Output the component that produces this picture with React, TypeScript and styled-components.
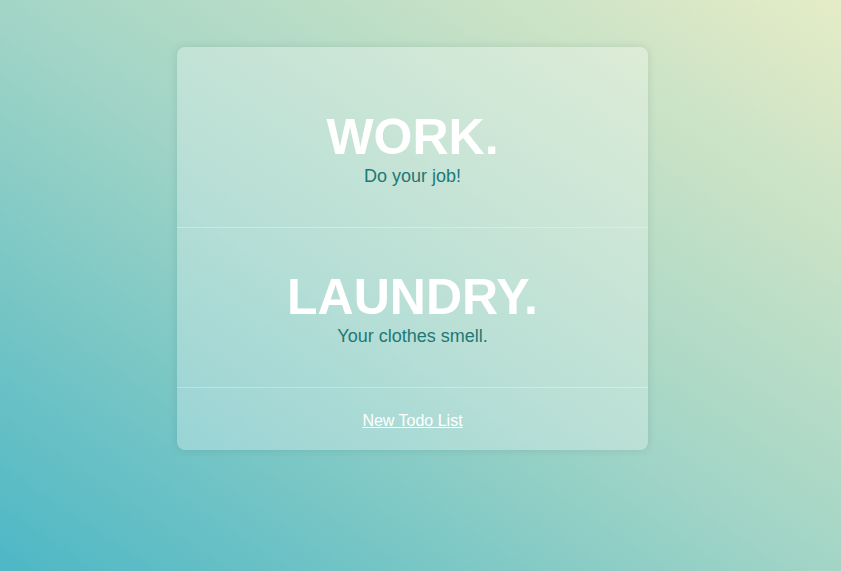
import styled, { createGlobalStyle } from "styled-components";

const GlobalStyle = createGlobalStyle`
  html, body {
    margin: 0;
    height: 100%;
  }
  body {
    font-family: "Liberation Sans", Arial, sans-serif;
    background: linear-gradient(to top right, #4db7c5 0%, #a3d5c6 50%, #e5ecc6 100%);
    background-attachment: fixed;
    min-height: 571px;
  }
`;

interface Todo {
  title: string;
  note: string;
}

const todos: Todo[] = [
  { title: "WORK.", note: "Do your job!" },
  { title: "LAUNDRY.", note: "Your clothes smell." },
];

function App() {
  return (
    <>
      <GlobalStyle />
      <StyledPage>
        <Card>
          {todos.map((todo) => (
            <Section key={todo.title}>
              <Title>{todo.title}</Title>
              <Note>{todo.note}</Note>
            </Section>
          ))}
          <Footer>
            <NewLink href="#">New Todo List</NewLink>
          </Footer>
        </Card>
      </StyledPage>
    </>
  );
}

export default App;

const StyledPage = styled.div`
  display: flex;
  justify-content: center;
  padding: 47px 16px 0 0;
`;

const Card = styled.div`
  width: 471px;
  padding-top: 20px;
  border-radius: 8px;
  background: rgba(255, 255, 255, 0.28);
  box-shadow: 0 0 8px rgba(0, 60, 60, 0.12);
  text-align: center;
  overflow: hidden;
`;

const Section = styled.div`
  padding: 45px 0 40px;
  border-bottom: 1px solid rgba(255, 255, 255, 0.3);

  & + & {
    padding: 44px 0 41px;
  }
`;

const Title = styled.h1`
  margin: 0 0 4px;
  font-size: 50px;
  line-height: 1;
  font-weight: bold;
  color: #ffffff;
`;

const Note = styled.p`
  margin: 0;
  font-size: 18px;
  line-height: 1.15;
  color: #1e7875;
`;

const Footer = styled.div`
  padding: 24px 0 19px;
`;

const NewLink = styled.a`
  font-size: 16px;
  line-height: 1.15;
  color: #ffffff;
  text-decoration: underline;
`;
